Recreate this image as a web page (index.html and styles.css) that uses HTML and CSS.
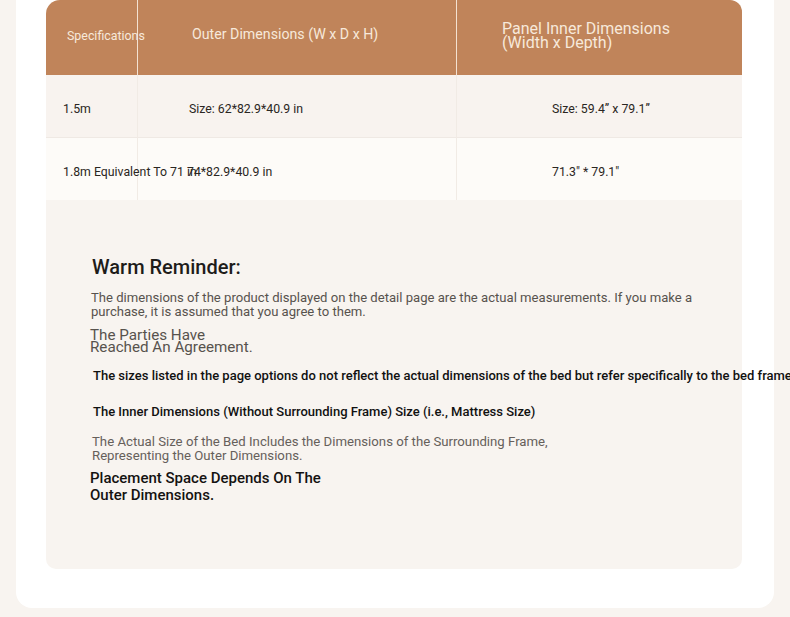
FILE: index.html
```html
<!DOCTYPE html>
<html lang="en">

<head>
    <meta charset="UTF-8">
    <meta name="viewport" content="width=device-width, initial-scale=1.0">
    <title>Size Chart</title>
    <link rel="stylesheet" href="styles.css">
</head>

<body>
    <div class="card">
        <div class="size-table">
            <div class="cell head head-spec">Specifications</div>
            <div class="cell head head-outer">Outer Dimensions (W x D x H)</div>
            <div class="cell head head-inner">Panel Inner Dimensions<br>(Width x Depth)</div>

            <div class="cell row-a spec">1.5m</div>
            <div class="cell row-a outer">Size: 62*82.9*40.9 in</div>
            <div class="cell row-a inner">Size: 59.4” x 79.1”</div>

            <div class="cell row-b spec">1.8m Equivalent To 71 in</div>
            <div class="cell row-b outer">74*82.9*40.9 in</div>
            <div class="cell row-b inner">71.3" * 79.1"</div>
        </div>

        <section class="reminder">
            <h2 class="reminder-title">Warm Reminder:</h2>
            <p class="note">
                The dimensions of the product displayed on the detail page are the actual measurements. If you make a
                purchase, it is assumed that you agree to them.
            </p>
            <p class="agreement">The Parties Have Reached An Agreement.</p>
            <p class="strong-line">The sizes listed in the page options do not reflect the actual dimensions of the bed but refer specifically to the bed frame</p>
            <p class="strong-line inner-line">The Inner Dimensions (Without Surrounding Frame) Size (i.e., Mattress Size)</p>
            <p class="note actual">The Actual Size of the Bed Includes the Dimensions of the Surrounding Frame, Representing the Outer Dimensions.</p>
            <p class="placement">Placement Space Depends On The Outer Dimensions.</p>
        </section>
    </div>
</body>

</html>
```

FILE: styles.css
```css
body {
    margin: 0;
    background: #f8f4f0;
    font-family: Roboto, "Liberation Sans", sans-serif;
    color: #222;
}

.card {
    margin: 0 16px;
    padding: 0 32px 39px 30px;
    background: #fff;
    border-radius: 0 0 16px 16px;
}

.size-table {
    display: grid;
    grid-template-columns: 91px 319px 286px;
    grid-template-rows: 75px 63px 62px;
}

.cell {
    display: flex;
    align-items: center;
    font-size: 12.3px;
    color: #2a2622;
    white-space: nowrap;
}

.head {
    background: #c0845a;
    color: #f7e9db;
}

/* first column text runs over the separator, keep it on top */
.spec,
.head-spec {
    position: relative;
    z-index: 1;
}

.head-spec {
    border-top-left-radius: 14px;
    padding-left: 21px;
    padding-bottom: 5px;
    font-size: 12.4px;
}

.head-outer {
    border-left: 1px solid #f4e2d2;
    padding-left: 54px;
    padding-bottom: 7px;
    font-size: 14.2px;
}

.head-inner {
    border-left: 1px solid #f4e2d2;
    border-top-right-radius: 12px;
    padding-left: 45px;
    padding-bottom: 4px;
    font-size: 16px;
    line-height: 14px;
    white-space: normal;
}

.row-a {
    background: #f8f3ef;
    border-bottom: 1px solid #efe9e4;
    padding-top: 5px;
}

.row-b {
    background: #fdfbf8;
    padding-top: 5px;
}

.spec {
    padding-left: 17px;
}

.outer {
    border-left: 1px solid #f1ebe5;
    padding-left: 51px;
}

.inner {
    border-left: 1px solid #f1ebe5;
    padding-left: 95px;
}

.row-b.outer {
    padding-left: 49px;
}

.reminder {
    background: #f8f4f0;
    border-radius: 0 0 10px 10px;
    padding: 56px 30px 65px 45px;
}

.reminder p {
    margin: 0;
}

.reminder-title {
    margin: 0 0 13px 1px;
    font-size: 20px;
    font-weight: 500;
    line-height: 22px;
    color: #1e1c1a;
}

.note {
    font-size: 13.1px;
    line-height: 14px;
    color: #57524d;
    max-width: 625px;
}

.agreement {
    margin-top: 10px !important;
    margin-left: -1px !important;
    width: 165px;
    font-size: 15.2px;
    line-height: 12px;
    color: #57524d;
}

.strong-line {
    font-size: 13px;
    font-weight: 500;
    color: #111;
    white-space: nowrap;
    margin-top: 15px !important;
    margin-left: 2px !important;
}

.inner-line {
    margin-top: 21px !important;
}

.actual {
    margin-top: 16px !important;
    margin-left: 1px !important;
    width: 480px;
    font-size: 13.2px;
    color: #66605b;
}

.placement {
    margin-top: 7px !important;
    margin-left: -1px !important;
    width: 250px;
    font-size: 15px;
    font-weight: 500;
    line-height: 17px;
    color: #141210;
}
```
